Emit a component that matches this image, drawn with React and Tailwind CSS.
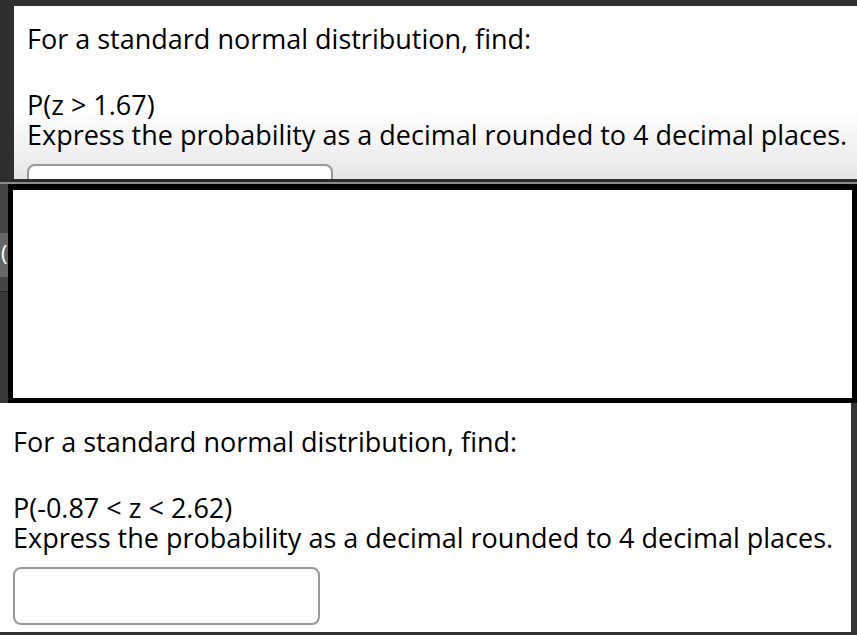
import React from 'react';

const font = { fontFamily: '"Open Sans", "Noto Sans", sans-serif', fontVariantLigatures: 'none' };

function Question({ expr, className }) {
    return (
        <div className={className} style={font}>
            <p className="text-[27px] leading-[30px] text-black">For a standard normal distribution, find:</p>
            <p className="text-[27px] leading-[30px] text-black mt-[36px]">{expr}</p>
            <p className="text-[27px] leading-[30px] text-black">Express the probability as a decimal rounded to 4 decimal places.</p>
        </div>
    );
}

export default function App() {
    return (
        <div className="w-[857px] h-[635px] bg-[#333333] flex flex-col overflow-hidden">
            {/* top screenshot */}
            <div className="h-[6px] bg-[#2f2f2f]" />
            <div className="flex h-[173px]">
                <div className="w-[14px] bg-[#2f2f2f]" />
                <div className="flex-1 overflow-hidden bg-[linear-gradient(to_bottom,#ffffff_60%,#e6e6e6)]">
                    <Question expr="P(z > 1.67)" className="pl-[13px] pt-[18px]" />
                    <div className="ml-[13px] mt-[14px] w-[306px] h-[58px] rounded-[8px] border-2 border-[#999999] bg-white" />
                </div>
            </div>
            <div className="h-[3px] bg-[#2b2b2b]" />
            <div className="h-[2px] bg-[#8c8c8c]" />

            {/* blank middle screenshot */}
            <div className="flex h-[219px]">
                <div className="w-[8px] flex flex-col">
                    <div className="h-[49px] bg-[#444444]" />
                    <div className="h-[44px] bg-[#666666] overflow-hidden relative">
                        <span className="absolute left-[1px] top-[4px] text-white text-[22px] leading-[30px]" style={font}>(</span>
                    </div>
                    <div className="h-[14px] bg-[#444444]" />
                    <div className="h-[1px] bg-[#222222]" />
                    <div className="flex-1 bg-[#383838]" />
                </div>
                <div className="flex-1 border-[5px] border-t-[6px] border-black bg-white" />
            </div>

            {/* bottom screenshot */}
            <div className="flex h-[229px]">
                <div className="flex-1 bg-white overflow-hidden">
                    <Question expr="P(-0.87 < z < 2.62)" className="pl-[13px] pt-[24px]" />
                    <div className="ml-[13px] mt-[14px] w-[307px] h-[58px] rounded-[8px] border-2 border-[#999999] bg-white" />
                </div>
                <div className="w-[6px] bg-[#333333]" />
            </div>
            <div className="flex-1 bg-[#333333]" />
        </div>
    );
}
